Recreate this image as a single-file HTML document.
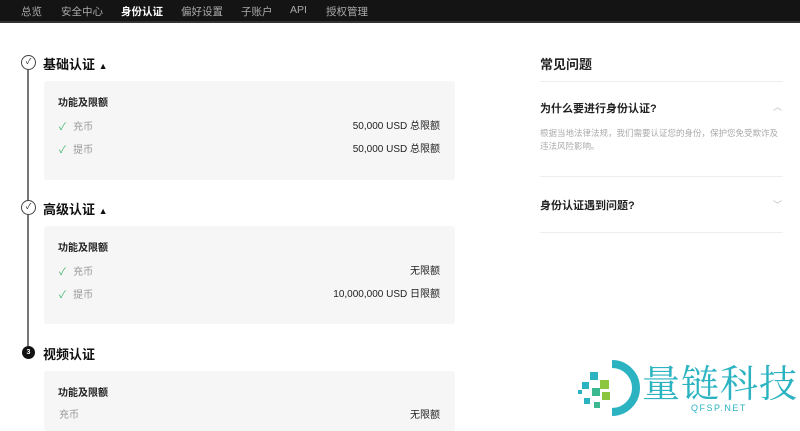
<!DOCTYPE html>
<html><head><meta charset="utf-8"><style>
*{margin:0;padding:0;box-sizing:border-box}
body{width:800px;height:420px;overflow:hidden;background:#fff;font-family:"Liberation Sans","Noto Sans CJK SC",sans-serif;color:#222;position:relative}
.nav{position:absolute;left:0;top:0;width:800px;height:23px;background:#141414;border-bottom:2px solid #333}
.nav span{position:absolute;top:4px;font-size:10.5px;color:#aaa}
.a{position:absolute;white-space:nowrap}
.box{position:absolute;left:44px;width:411px;background:#f6f6f6;border-radius:3px}
.h{font-size:13px;font-weight:bold;color:#111}
.s{font-size:10px;font-weight:bold;color:#222}
.g{font-size:10px;color:#999}
.v{font-size:10px;color:#222;text-align:right;right:360px}
.ck{color:#3db26a;font-size:10px}
.line{position:absolute;left:540px;width:243px;height:1px;background:#eee}
</style></head><body>
<div class="nav">
<span style="left:21px">总览</span><span style="left:61px">安全中心</span><span style="left:121px;color:#fff;font-weight:bold">身份认证</span><span style="left:181px">偏好设置</span><span style="left:241px">子账户</span><span style="left:290px">API</span><span style="left:326px">授权管理</span>
</div>
<div style="position:absolute;left:27px;top:69px;width:2px;height:277px;background:#777"></div>
<div class="a" style="left:21px;top:55px;width:15px;height:15px;border:1.3px solid #444;border-radius:50%;background:#fff;font-size:8px;text-align:center;line-height:12px">✓</div>
<div class="a" style="left:21px;top:200px;width:15px;height:15px;border:1.3px solid #444;border-radius:50%;background:#fff;font-size:8px;text-align:center;line-height:12px">✓</div>
<div class="a" style="left:22px;top:346px;width:13px;height:13px;border-radius:50%;background:#111;color:#fff;font-size:7px;text-align:center;line-height:13px;font-weight:bold">3</div>
<div class="a h" style="left:43px;top:54px">基础认证 <span style="font-size:9px">▲</span></div>
<div class="a h" style="left:43px;top:199px">高级认证 <span style="font-size:9px">▲</span></div>
<div class="a h" style="left:43px;top:344px">视频认证</div>
<div class="box" style="top:81px;height:99px"></div>
<div class="box" style="top:226px;height:98px"></div>
<div class="box" style="top:371px;height:60px"></div>
<div class="a s" style="left:58px;top:94px">功能及限额</div>
<div class="a" style="left:59px;top:117px"><span class="ck">✓</span> <span class="g">&nbsp;充币</span></div>
<div class="a v" style="top:117px">50,000 USD 总限额</div>
<div class="a" style="left:59px;top:140px"><span class="ck">✓</span> <span class="g">&nbsp;提币</span></div>
<div class="a v" style="top:140px">50,000 USD 总限额</div>
<div class="a s" style="left:58px;top:239px">功能及限额</div>
<div class="a" style="left:59px;top:262px"><span class="ck">✓</span> <span class="g">&nbsp;充币</span></div>
<div class="a v" style="top:262px">无限额</div>
<div class="a" style="left:59px;top:285px"><span class="ck">✓</span> <span class="g">&nbsp;提币</span></div>
<div class="a v" style="top:285px">10,000,000 USD 日限额</div>
<div class="a s" style="left:58px;top:384px">功能及限额</div>
<div class="a g" style="left:59px;top:406px">充币</div>
<div class="a v" style="top:406px">无限额</div>
<div class="a" style="left:540px;top:54px;font-size:13px;font-weight:bold">常见问题</div>
<div class="line" style="top:81px"></div>
<div class="a" style="left:540px;top:100px;font-size:11px;font-weight:bold">为什么要进行身份认证?</div>
<div class="a" style="left:773px;top:100px;font-size:9px;color:#bbb">︿</div>
<div class="a" style="left:540px;top:127px;width:245px;font-size:8.5px;color:#aaa;line-height:13px;white-space:normal">根据当地法律法规，我们需要认证您的身份，保护您免受欺诈及违法风险影响。</div>
<div class="line" style="top:176px"></div>
<div class="a" style="left:540px;top:197px;font-size:11px;font-weight:bold">身份认证遇到问题?</div>
<div class="a" style="left:773px;top:198px;font-size:9px;color:#bbb">﹀</div>
<div class="line" style="top:232px"></div>
<svg class="a" style="left:572px;top:358px" width="70" height="60" viewBox="0 0 70 60">
<path d="M40 6 A24 24 0 0 1 40 54" stroke="#2bb3c2" stroke-width="8" fill="none"/>
<rect x="18" y="14" width="8" height="8" fill="#2bb3c2"/><rect x="28" y="22" width="9" height="9" fill="#8cc63f"/>
<rect x="10" y="24" width="7" height="7" fill="#2bb3c2"/><rect x="20" y="30" width="8" height="8" fill="#3cb890"/>
<rect x="30" y="34" width="8" height="8" fill="#8cc63f"/><rect x="12" y="40" width="6" height="6" fill="#2bb3c2"/>
<rect x="22" y="44" width="6" height="6" fill="#3cb890"/><rect x="6" y="32" width="4" height="4" fill="#2bb3c2"/>
</svg>
<div class="a" style="left:642px;top:353px;font-size:38px;color:#2bb3c2;font-family:'Noto Serif CJK SC',serif;letter-spacing:1px">量链科技</div>
<div class="a" style="left:691px;top:403px;font-size:9px;color:#2bb3c2;letter-spacing:1.5px">QFSP.NET</div>
</body></html>
